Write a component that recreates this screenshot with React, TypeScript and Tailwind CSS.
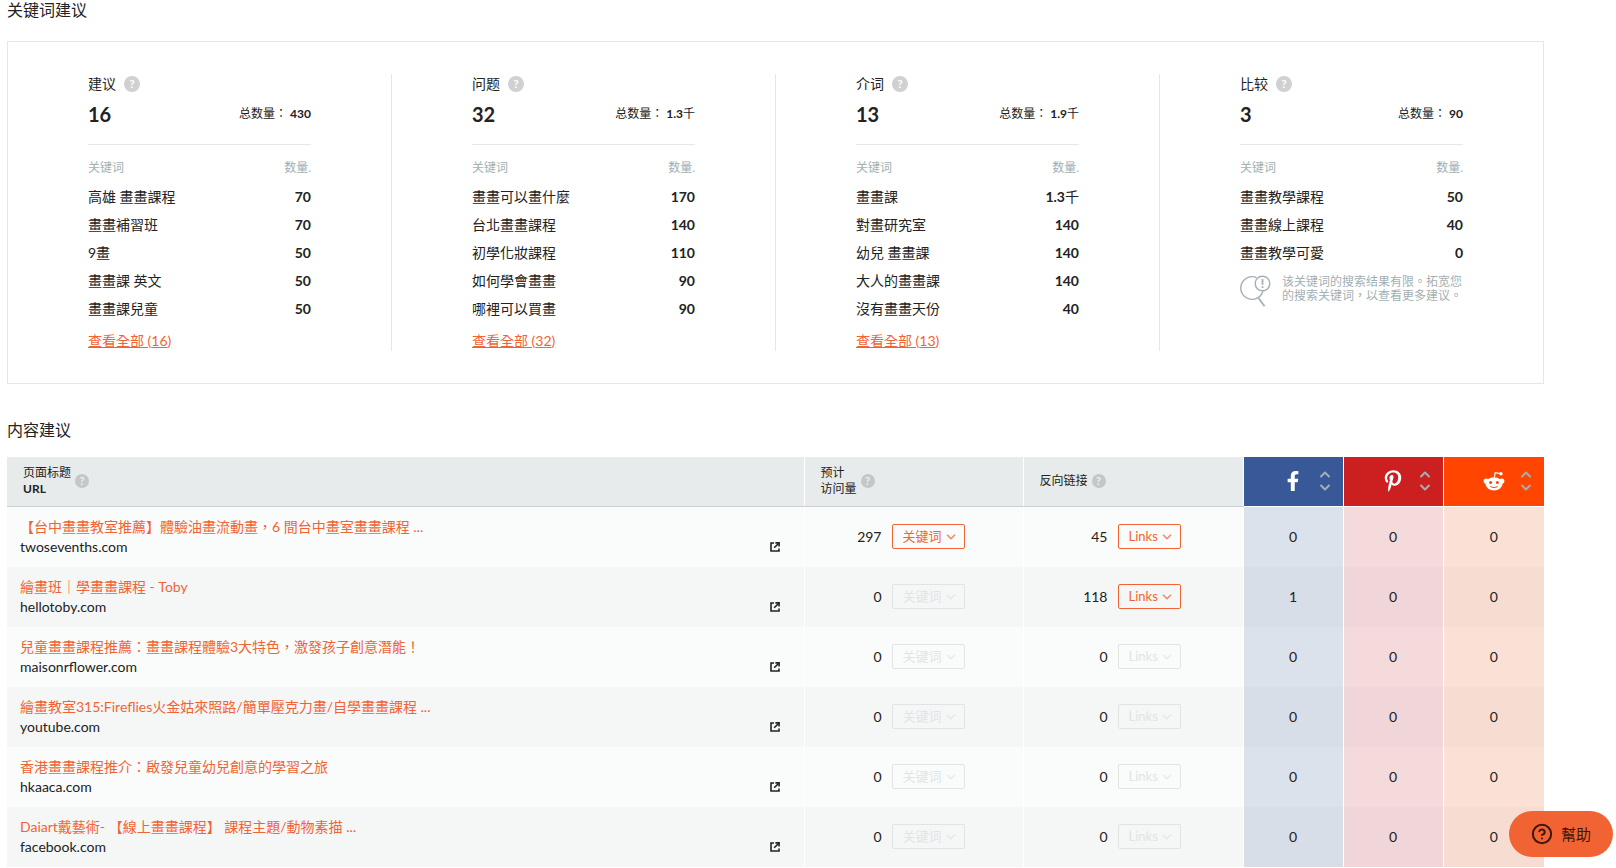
import { FaFacebookF, FaPinterestP } from "react-icons/fa";
import { ChevronDown, ChevronUp, CircleHelp } from "lucide-react";

interface Keyword {
  text: string;
  volume: string;
}

interface Group {
  title: string;
  count: number;
  total: string;
  keywords: Keyword[];
  limited?: boolean;
}

interface Page {
  title: string;
  domain: string;
  visits: number;
  links: number;
  social: number[];
}

const groups: Group[] = [
  {
    title: "建议",
    count: 16,
    total: "430",
    keywords: [
      { text: "高雄 畫畫課程", volume: "70" },
      { text: "畫畫補習班", volume: "70" },
      { text: "9畫", volume: "50" },
      { text: "畫畫課 英文", volume: "50" },
      { text: "畫畫課兒童", volume: "50" },
    ],
  },
  {
    title: "问题",
    count: 32,
    total: "1.3千",
    keywords: [
      { text: "畫畫可以畫什麼", volume: "170" },
      { text: "台北畫畫課程", volume: "140" },
      { text: "初學化妝課程", volume: "110" },
      { text: "如何學會畫畫", volume: "90" },
      { text: "哪裡可以買畫", volume: "90" },
    ],
  },
  {
    title: "介词",
    count: 13,
    total: "1.9千",
    keywords: [
      { text: "畫畫課", volume: "1.3千" },
      { text: "對畫研究室", volume: "140" },
      { text: "幼兒 畫畫課", volume: "140" },
      { text: "大人的畫畫課", volume: "140" },
      { text: "沒有畫畫天份", volume: "40" },
    ],
  },
  {
    title: "比较",
    count: 3,
    total: "90",
    keywords: [
      { text: "畫畫教學課程", volume: "50" },
      { text: "畫畫線上課程", volume: "40" },
      { text: "畫畫教學可愛", volume: "0" },
    ],
    limited: true,
  },
];

const pages: Page[] = [
  { title: "【台中畫畫教室推薦】體驗油畫流動畫，6 間台中畫室畫畫課程 ...", domain: "twosevenths.com", visits: 297, links: 45, social: [0, 0, 0] },
  { title: "繪畫班｜學畫畫課程 - Toby", domain: "hellotoby.com", visits: 0, links: 118, social: [1, 0, 0] },
  { title: "兒童畫畫課程推薦：畫畫課程體驗3大特色，激發孩子創意潛能！", domain: "maisonrflower.com", visits: 0, links: 0, social: [0, 0, 0] },
  { title: "繪畫教室315:Fireflies火金姑來照路/簡單壓克力畫/自學畫畫課程 ...", domain: "youtube.com", visits: 0, links: 0, social: [0, 0, 0] },
  { title: "香港畫畫課程推介：啟發兒童幼兒創意的學習之旅", domain: "hkaaca.com", visits: 0, links: 0, social: [0, 0, 0] },
  { title: "Daiart戴藝術- 【線上畫畫課程】 課程主題/動物素描 ...", domain: "facebook.com", visits: 0, links: 0, social: [0, 0, 0] },
];

const socialCells = [
  "bg-[#dce2ec] group-even:bg-[#d8dee8]",
  "bg-[#f5dadc] group-even:bg-[#f0d6d9]",
  "bg-[#fbe0d5] group-even:bg-[#f6dcd1]",
];

const HelpDot = ({ small }: { small?: boolean }) => (
  <button
    type="button"
    aria-label="help"
    className={`flex shrink-0 items-center justify-center rounded-full font-bold ${
      small ? "size-3.5 bg-[#c4c7c8] text-[11px] text-[#eef1f2]" : "size-4 bg-[#cfd0d1] text-xs text-white"
    }`}
  >
    ?
  </button>
);

const LimitedIcon = () => (
  <svg width="32" height="32" viewBox="0 0 32 32" fill="none" stroke="#a3afb2" strokeWidth="1.4" className="shrink-0">
    <path d="M16.5 2.6A11.3 11.3 0 1 0 22.9 16.2" />
    <circle cx="22.5" cy="8.5" r="7.3" />
    <path d="M18.6 23.2l6 8" strokeWidth="1.8" />
    <path d="M22.5 4v5.8M22.5 11.2v1.8" strokeWidth="1.8" />
  </svg>
);

const OpenIcon = () => (
  <svg width="10" height="10" viewBox="0 0 10 10" fill="none" stroke="#222" strokeWidth="1.6">
    <path d="M4 1H1v8h8V6.6" />
    <path d="M5.4 .9H9.1V4.6" />
    <path d="M8.8 1.2L4.2 5.8" />
  </svg>
);

const RedditIcon = () => (
  <svg width="22" height="20" viewBox="0 0 22 20" fill="#fff">
    <path d="M11.3 6.5l.9-4.8 5.2 1" fill="none" stroke="#fff" strokeWidth="1.2" />
    <circle cx="18" cy="2.8" r="1.7" />
    <circle cx="3.2" cy="10" r="2.6" />
    <circle cx="18.8" cy="10" r="2.6" />
    <ellipse cx="11" cy="12.8" rx="8.6" ry="6.6" />
    <circle cx="7.6" cy="11.4" r="1.5" fill="#ff4500" />
    <circle cx="14.4" cy="11.4" r="1.5" fill="#ff4500" />
    <path d="M7.4 15.4c2 1.5 5.2 1.5 7.2 0" fill="none" stroke="#ff4500" strokeWidth="1" />
  </svg>
);

const Volume = ({ value }: { value: string }) => {
  const number = value.replace("千", "");
  return (
    <>
      <span className="font-bold">{number}</span>
      {number !== value && "千"}
    </>
  );
};

const GroupColumn = ({ group }: { group: Group }) => (
  <div className="flex-1 border-r border-[#e4e8e9] px-20 last:border-r-0">
    <div className="flex h-5 items-center gap-2 text-sm">
      <h3>{group.title}</h3>
      <HelpDot />
    </div>
    <div className="mt-1.5 flex h-7 items-center justify-between">
      <span className="text-xl font-bold">{group.count}</span>
      <span className="text-xs">
        总数量： <Volume value={group.total} />
      </span>
    </div>
    <table className="mt-4 w-full border-t border-[#e4e8e9] text-sm">
      <thead>
        <tr className="h-[38px] text-xs text-[#a3afb2]">
          <th className="pt-2 text-left font-normal">关键词</th>
          <th className="pt-2 text-right font-normal">数量.</th>
        </tr>
      </thead>
      <tbody>
        {group.keywords.map((keyword) => (
          <tr key={keyword.text} className="h-7">
            <td>{keyword.text}</td>
            <td className="text-right">
              <Volume value={keyword.volume} />
            </td>
          </tr>
        ))}
      </tbody>
    </table>
    {group.limited ? (
      <div className="mt-2 flex gap-2.5 text-xs text-[#a3afb2]">
        <LimitedIcon />
        <p className="flex-1 leading-[14px]">该关键词的搜索结果有限。拓宽您的搜索关键词，以查看更多建议。</p>
      </div>
    ) : (
      <a href="#all" className="mt-2 block w-fit text-sm text-[#f26334] underline">
        查看全部 ({group.count})
      </a>
    )}
  </div>
);

const Dropdown = ({ label, value }: { label: string; value: number }) => (
  <button
    type="button"
    disabled={value === 0}
    className="flex h-[25px] items-center gap-0.5 rounded-xs border border-[#f26334] pr-1.5 pl-2.5 text-[13px] text-[#f26334] disabled:border-[#e0e4e5] disabled:text-[#dfe4e5]"
  >
    {label}
    <ChevronDown size={14} strokeWidth={3} className="opacity-70" />
  </button>
);

const Sorter = () => (
  <span className="absolute top-1/2 right-2.5 flex -translate-y-1/2 flex-col -space-y-[3px] text-[#a3afb2]">
    <ChevronUp size={16} strokeWidth={3} />
    <ChevronDown size={16} strokeWidth={3} />
  </span>
);

export default function App() {
  return (
    <div className="min-h-screen bg-white pr-[72px] pl-[7px] font-['Lato','Noto_Sans_CJK_TC',sans-serif] text-[#222]">
      <h2 className="pb-[22px] text-base leading-[19px]">关键词建议</h2>

      <section className="flex border border-[#e4e8e9] py-8">
        {groups.map((group) => (
          <GroupColumn key={group.title} group={group} />
        ))}
      </section>

      <h2 className="pt-8 pb-[13px] text-base leading-7">内容建议</h2>

      <table className="w-full table-fixed text-sm">
        <colgroup>
          <col />
          <col className="w-[219px]" />
          <col className="w-[220px]" />
          <col className="w-[100px]" />
          <col className="w-[100px]" />
          <col className="w-[101px]" />
        </colgroup>
        <thead>
          <tr className="h-[50px] text-left text-xs leading-4">
            <th className="border-r border-b border-r-white border-b-[#ccd1d3] bg-[#e7ebec] pl-4 font-normal">
              <div className="flex items-center gap-1">
                <div>
                  页面标题
                  <br />
                  <b>URL</b>
                </div>
                <HelpDot small />
              </div>
            </th>
            <th className="border-r border-b border-r-white border-b-[#ccd1d3] bg-[#e7ebec] pl-4 font-normal">
              <div className="flex items-center gap-1">
                <div>
                  预计
                  <br />
                  访问量
                </div>
                <HelpDot small />
              </div>
            </th>
            <th className="border-r border-b border-r-white border-b-[#ccd1d3] bg-[#e7ebec] pl-4 font-normal">
              <div className="flex items-center gap-1">
                反向链接
                <HelpDot small />
              </div>
            </th>
            <th className="relative border-r border-b border-white bg-[#385898]">
              <FaFacebookF size={20} color="#fff" className="mx-auto" title="Facebook" />
              <Sorter />
            </th>
            <th className="relative border-r border-b border-white bg-[#cc1f20]">
              <FaPinterestP size={22} color="#fff" className="mx-auto" title="Pinterest" />
              <Sorter />
            </th>
            <th className="relative border-b border-white bg-[#ff4500]">
              <div className="flex justify-center">
                <RedditIcon />
              </div>
              <Sorter />
            </th>
          </tr>
        </thead>
        <tbody>
          {pages.map((page) => (
            <tr key={page.domain} className="group h-[60px] bg-[#fafcfb] even:bg-[#f5f7f7]">
              <td className="border-r border-white pr-6 pl-[13px]">
                <a href="#page" className="block truncate leading-5 text-[#f26334]">
                  {page.title}
                </a>
                <div className="flex items-center justify-between leading-5">
                  {page.domain}
                  <a href="#open" aria-label="open">
                    <OpenIcon />
                  </a>
                </div>
              </td>
              <td className="border-r border-white">
                <div className="flex items-center gap-2.5">
                  <span className="w-[77px] text-right">{page.visits}</span>
                  <Dropdown label="关键词" value={page.visits} />
                </div>
              </td>
              <td className="border-r border-white">
                <div className="flex items-center gap-2.5">
                  <span className="w-[84px] text-right">{page.links}</span>
                  <Dropdown label="Links" value={page.links} />
                </div>
              </td>
              {page.social.map((shares, i) => (
                <td key={i} className={`border-r border-white text-center last:border-r-0 ${socialCells[i]}`}>
                  {shares}
                </td>
              ))}
            </tr>
          ))}
        </tbody>
      </table>

      <button
        type="button"
        className="fixed right-[3px] bottom-[11px] flex h-[46px] items-center gap-2 rounded-full bg-[#f26334] px-[22px] text-[15px] text-[#3a170b]"
      >
        <CircleHelp size={22} strokeWidth={2.2} />
        幫助
      </button>
    </div>
  );
}
